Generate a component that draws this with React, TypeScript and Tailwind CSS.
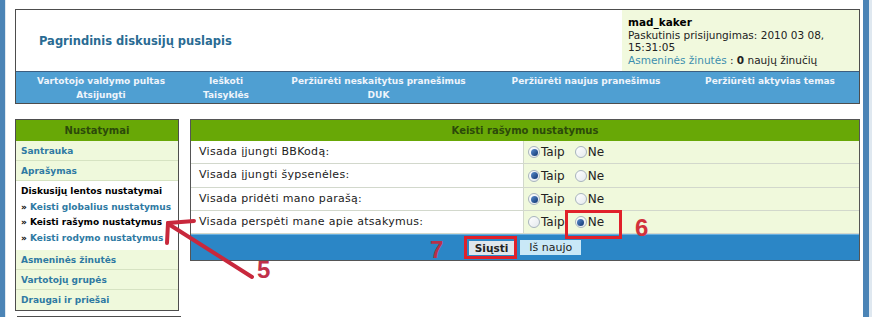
import React from 'react';

const navTop = [
  'Vartotojo valdymo pultas',
  'Ieškoti',
  'Peržiūrėti neskaitytus pranešimus',
  'Peržiūrėti naujus pranešimus',
  'Peržiūrėti aktyvias temas',
];
const navBottom = ['Atsijungti', 'Taisyklės', 'DUK', '', ''];

const rows = [
  { label: 'Visada įjungti BBKodą:', yes: true },
  { label: 'Visada įjungti šypsenėles:', yes: true },
  { label: 'Visada pridėti mano parašą:', yes: true },
  { label: 'Visada perspėti mane apie atsakymus:', yes: false },
];

function Radio({ on }: { on: boolean }) {
  return (
    <span className="inline-flex w-[12px] h-[12px] rounded-full border border-[#a8b4be] bg-gradient-to-br from-white to-[#e4e9ed] items-center justify-center">
      {on && <span className="w-[7px] h-[7px] rounded-full bg-gradient-to-br from-[#5c8fd0] to-[#0f3470]" />}
    </span>
  );
}

function SideRow({ children }: { children: React.ReactNode }) {
  return (
    <div className="h-[20px] leading-[20px] pl-[5px] bg-[#eff9dc] border-b border-[#d6e3c2] text-[#2f7aa3] font-bold whitespace-nowrap">
      {children}
    </div>
  );
}

export default function App() {
  return (
    <div className="relative w-[872px] h-[317px] overflow-hidden bg-white flex font-['DejaVu_Sans',Verdana,sans-serif] text-[11px] text-[#222]">
      <div className="w-[5px] bg-[#4b84b6]" />
      <div className="w-[1px] bg-[#dfe8f0]" />
      <div className="flex-1 pl-[9px] pr-[3px] pt-[9px]">
        {/* header */}
        <div className="border border-[#4d4d4d]">
          <div className="flex h-[61px]">
            <div className="flex-1 flex items-center pl-[23px] pt-[3px]">
              <span className="text-[11.5px] font-bold text-[#2a6b93]">Pagrindinis diskusijų puslapis</span>
            </div>
            <div className="w-[237px] bg-[#f1f9dd] pl-[6px] pt-[6px] leading-[12.5px] text-[10.5px]">
              <div className="font-bold text-black">mad_kaker</div>
              <div>Paskutinis prisijungimas: 2010 03 08,</div>
              <div>15:31:05</div>
              <div>
                <span className="text-[#3d8fae]">Asmeninės žinutės</span> : <b>0</b> naujų žinučių
              </div>
            </div>
          </div>
          <div className="border-t border-[#3c5e80] bg-[#4f9fd2] h-[32px] pt-[3px] grid grid-cols-[170px_80px_225px_190px_1fr] text-[9px] font-bold text-[#eef4fb] leading-[13px]">
            {navTop.map((t) => (
              <div key={t} className="text-center whitespace-nowrap">{t}</div>
            ))}
            {navBottom.map((t, i) => (
              <div key={i} className="text-center whitespace-nowrap">{t}</div>
            ))}
          </div>
        </div>

        <div className="flex mt-[15px] gap-[11px] items-start">
          {/* sidebar */}
          <div className="w-[164px] border border-[#4d4d4d] text-[9px] shrink-0">
            <div className="h-[21px] leading-[21px] text-center bg-[#68a806] text-[#2c4a0a] font-bold text-[10px]">Nustatymai</div>
            <SideRow>Santrauka</SideRow>
            <SideRow>Aprašymas</SideRow>
            <div className="bg-white pl-[5px] pt-[3px] pb-[3px] leading-[15.7px] font-bold h-[69px] whitespace-nowrap">
              <div className="text-black">Diskusijų lentos nustatymai</div>
              <div className="text-[#2f7aa3]"><span className="text-black">»</span> Keisti globalius nustatymus</div>
              <div className="text-black">» Keisti rašymo nustatymus</div>
              <div className="text-[#2f7aa3]"><span className="text-black">»</span> Keisti rodymo nustatymus</div>
            </div>
            <SideRow>Asmeninės žinutės</SideRow>
            <SideRow>Vartotojų grupės</SideRow>
            <div className="h-[20px] leading-[20px] pl-[5px] bg-[#eff9dc] text-[#2f7aa3] font-bold">Draugai ir priešai</div>
          </div>

          {/* main panel */}
          <div className="flex-1 border border-[#555]">
            <div className="h-[21px] leading-[21px] text-center bg-[#68a806] text-[#2c4a0a] font-bold text-[10px]">
              Keisti rašymo nustatymus
            </div>
            {rows.map((r, i) => (
              <div key={i} className={`flex border-b border-[#d2d8cc] ${i === 1 ? 'h-[24px]' : 'h-[23px]'}`}>
                <div className="w-[333px] bg-white border-r border-[#d2d8cc] pl-[8px] flex items-center tracking-[0.3px]">{r.label}</div>
                <div className="flex-1 bg-[#f0f9dc] flex items-center pl-[4px] text-[12px]">
                  <Radio on={r.yes} />
                  <span className="ml-[1px] mr-[10px]">Taip</span>
                  <Radio on={!r.yes} />
                  <span className="ml-[1px]">Ne</span>
                </div>
              </div>
            ))}
            <div className="h-[26px] bg-[#2b86c6] flex items-center justify-center gap-[6px] border-t border-[#6ab0e0]">
              <span className="h-[14px] px-[6px] leading-[14px] bg-[#dfe6ec] font-bold text-[#222] text-[10.5px]">Siųsti</span>
              <span className="h-[15px] px-[9px] leading-[15px] bg-[#c9e8f7] text-[#222]">Iš naujo</span>
            </div>
          </div>
        </div>
        <div className="ml-[2px] mt-[5px] w-[164px] border-t border-[#4d4d4d]" />
      </div>
      <div className="w-[6px] bg-[#4b84b6]" />
      <div className="w-[3px] bg-[#dfe8f0]" />

      {/* annotations */}
      <div className="absolute left-[464px] top-[236px] w-[53px] h-[23px] border-[3px] border-[#e0202a]" />
      <div className="absolute left-[565px] top-[210px] w-[57px] h-[29px] border-[3px] border-[#e0202a]" />
      <div className="absolute left-[430px] top-[238px] text-[24px] leading-[24px] font-bold font-['Liberation_Sans',Arial,sans-serif] text-[#b83048]">7</div>
      <div className="absolute left-[635px] top-[216px] text-[24px] leading-[24px] font-bold font-['Liberation_Sans',Arial,sans-serif] text-[#d2323c]">6</div>
      <div className="absolute left-[257px] top-[258px] text-[24px] leading-[24px] font-bold font-['Liberation_Sans',Arial,sans-serif] text-[#c0304a]">5</div>
      <svg className="absolute left-0 top-0" width="872" height="317">
        <g stroke="#c8283c" strokeWidth="4" strokeLinecap="round" fill="none">
          <line x1="252" y1="277" x2="170" y2="225" />
          <line x1="168" y1="223" x2="194" y2="221" />
          <line x1="168" y1="223" x2="167" y2="243" />
        </g>
      </svg>
    </div>
  );
}
